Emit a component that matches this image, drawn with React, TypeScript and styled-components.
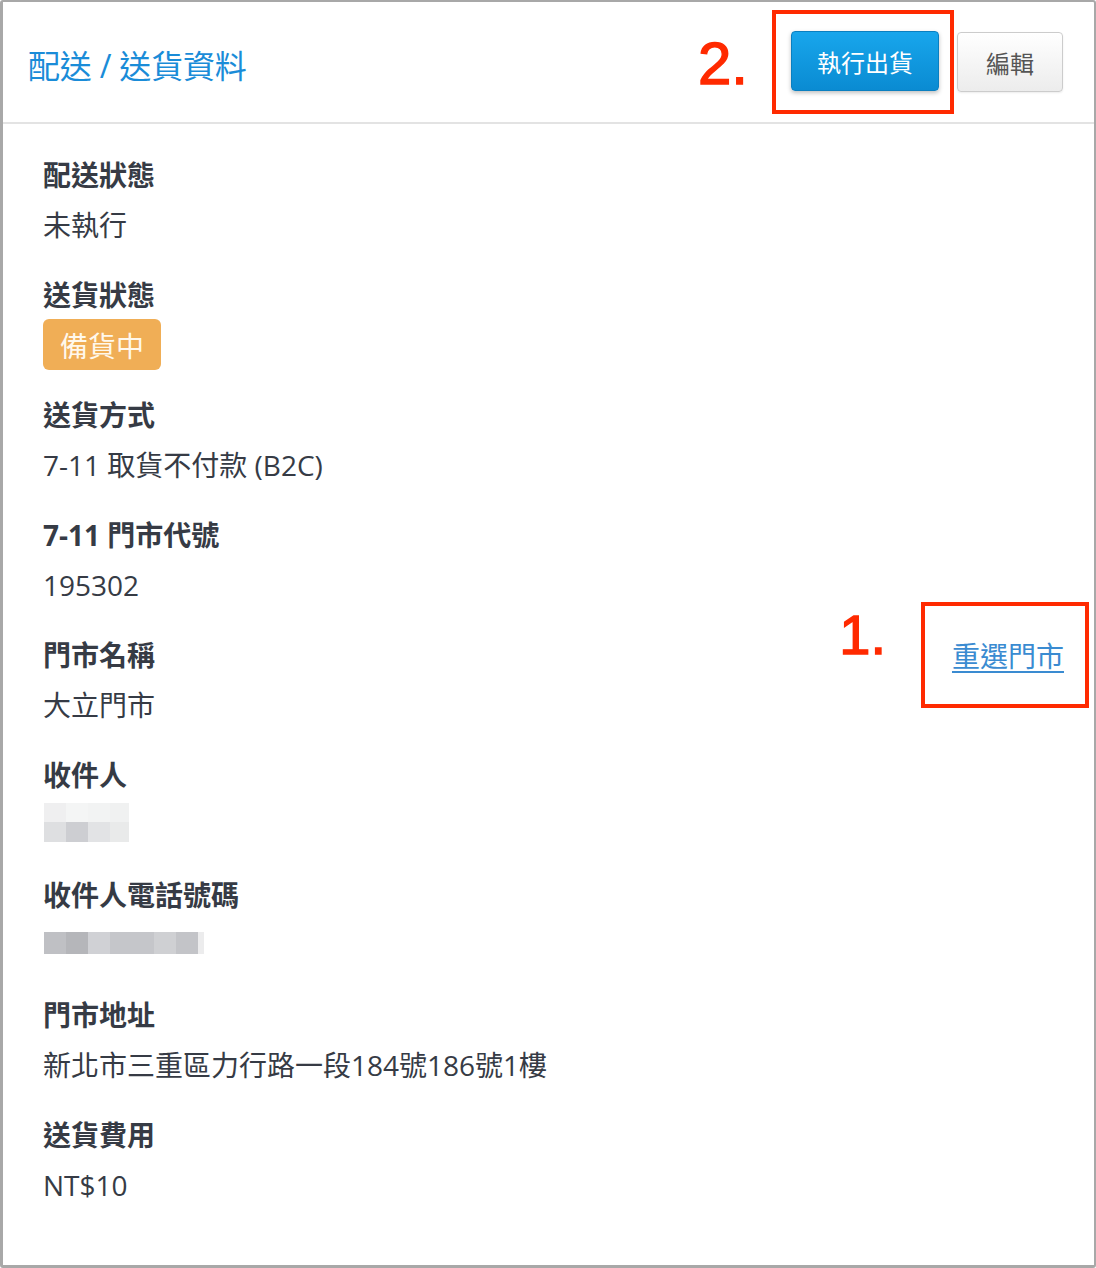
import React from "react";
import styled, { createGlobalStyle } from "styled-components";

const Global = createGlobalStyle`
  html, body { margin: 0; padding: 0; background: #ffffff; }
  body { font-family: "Open Sans", "Noto Sans CJK TC", sans-serif; }
  * { box-sizing: border-box; }
`;

const FONT = `"Open Sans", "Noto Sans CJK TC", sans-serif`;
const NOTE_RED = "#ff2a00";

const Frame = styled.div`
  width: 1096px;
  height: 1268px;
  border: 2px solid #a8a8a8;
  border-left-width: 3px;
  border-bottom-width: 3px;
  border-radius: 3px;
  background: #fff;
  display: flex;
  flex-direction: column;
  overflow: hidden;
`;

const Header = styled.header`
  height: 122px;
  flex: none;
  display: flex;
  align-items: center;
  justify-content: space-between;
  padding: 0 31px 0 25px;
  border-bottom: 2px solid #e3e3e3;
`;

const Title = styled.h1`
  margin: 4px 0 0;
  font-family: ${FONT};
  font-size: 32px;
  font-weight: 400;
  color: #1a8cd8;
  letter-spacing: -0.2px;
`;

const Actions = styled.div`
  display: flex;
  align-items: center;
`;

const StepNote = styled.span<{ $size: number }>`
  font-family: "Liberation Sans", Arial, sans-serif;
  font-size: ${(p) => p.$size}px;
  line-height: 1;
  color: ${NOTE_RED};
  font-weight: 400;
  -webkit-text-stroke: 1.4px ${NOTE_RED};
`;

const HeaderNote = styled(StepNote)`
  margin-right: 24px;
  margin-top: 4px;
`;

const Highlight = styled.div<{ $pad: string }>`
  border: 4px solid ${NOTE_RED};
  padding: ${(p) => p.$pad};
  display: flex;
  align-items: center;
`;

const Button = styled.button<{ $primary?: boolean; $padX: number }>`
  height: 60px;
  padding: 0 ${(p) => p.$padX}px;
  font-family: ${FONT};
  font-size: 24px;
  border-radius: 4px;
  cursor: pointer;
  ${(p) =>
    p.$primary
      ? `
    color: #ffffff;
    background: linear-gradient(#18a6ec, #0a8bd2);
    border: 1px solid #0a7fc0;
    box-shadow: 0 2px 4px rgba(0, 0, 0, 0.25);
  `
      : `
    color: #555555;
    background: linear-gradient(#ffffff, #ececec);
    border: 1px solid #cccccc;
    box-shadow: 0 1px 2px rgba(0, 0, 0, 0.08);
  `}
`;

const EditButton = styled(Button)`
  margin-left: 3px;
`;

const Body = styled.main`
  padding: 26px 31px 0 40px;
  display: flex;
  flex-direction: column;
`;

const Field = styled.section`
  margin-bottom: 20px;
  display: flex;
  justify-content: space-between;
  align-items: flex-start;
`;

const FieldMain = styled.div`
  display: flex;
  flex-direction: column;
`;

const Label = styled.div`
  font-family: ${FONT};
  font-size: 28px;
  font-weight: 700;
  line-height: 50px;
  color: #363b45;
`;

const Value = styled.div`
  font-family: ${FONT};
  font-size: 28px;
  font-weight: 400;
  line-height: 50px;
  height: 50px;
  color: #363b45;
`;

const Badge = styled.span`
  display: inline-flex;
  align-items: center;
  height: 51px;
  margin-top: -1px;
  padding: 0 17px;
  border-radius: 6px;
  background: #f0ae56;
  color: #fff8ec;
  font-family: ${FONT};
  font-size: 28px;
  align-self: flex-start;
`;

const BlurSlot = styled.div`
  height: 50px;
`;

const Pixels = styled.div<{ $top: number }>`
  display: flex;
  flex-direction: column;
  margin-top: ${(p) => p.$top}px;
  margin-left: 1px;
`;

const PixelRow = styled.div<{ $h: number }>`
  display: flex;
  height: ${(p) => p.$h}px;
`;

const Pixel = styled.div<{ $w: number; $c: string }>`
  width: ${(p) => p.$w}px;
  background: ${(p) => p.$c};
`;

const StorePick = styled.div`
  display: flex;
  align-items: flex-start;
  margin-top: -28px;
  margin-right: -26px;
`;

const SideNote = styled(StepNote)`
  margin-top: 5px;
  margin-right: 35px;
`;

const ReselectLink = styled.a`
  font-family: ${FONT};
  font-size: 28px;
  line-height: 50px;
  color: #3a8bd1;
  text-decoration: underline;
  text-underline-offset: 4px;
  text-decoration-thickness: 2px;
  cursor: pointer;
`;

type PixelSpec = { w: number; c: string };

const nameRows: { h: number; cells: PixelSpec[] }[] = [
  {
    h: 19,
    cells: [
      { w: 22, c: "#efeff0" },
      { w: 22, c: "#f4f5f5" },
      { w: 22, c: "#f2f3f3" },
      { w: 19, c: "#f0f1f1" },
    ],
  },
  {
    h: 20,
    cells: [
      { w: 22, c: "#dedfe1" },
      { w: 22, c: "#cdced2" },
      { w: 22, c: "#e2e3e5" },
      { w: 19, c: "#e9eaea" },
    ],
  },
];

const phoneRows: { h: number; cells: PixelSpec[] }[] = [
  {
    h: 22,
    cells: [
      { w: 22, c: "#bfc0c4" },
      { w: 22, c: "#b5b6ba" },
      { w: 22, c: "#d0d1d5" },
      { w: 44, c: "#c5c6ca" },
      { w: 22, c: "#cfd0d3" },
      { w: 22, c: "#c3c4c8" },
      { w: 6, c: "#ececed" },
    ],
  },
];

const Blurred = ({ rows, top }: { rows: { h: number; cells: PixelSpec[] }[]; top: number }) => (
  <BlurSlot>
    <Pixels $top={top}>
      {rows.map((r, i) => (
        <PixelRow key={i} $h={r.h}>
          {r.cells.map((c, j) => (
            <Pixel key={j} $w={c.w} $c={c.c} />
          ))}
        </PixelRow>
      ))}
    </Pixels>
  </BlurSlot>
);

export default function App() {
  return (
    <>
      <Global />
      <Frame>
        <Header>
          <Title>配送 / 送貨資料</Title>
          <Actions>
            <HeaderNote $size={60}>2.</HeaderNote>
            <Highlight $pad="17px 11px 19px 15px">
              <Button $primary $padX={25}>執行出貨</Button>
            </Highlight>
            <EditButton $padX={28}>編輯</EditButton>
          </Actions>
        </Header>
        <Body>
          <Field>
            <FieldMain>
              <Label>配送狀態</Label>
              <Value>未執行</Value>
            </FieldMain>
          </Field>
          <Field>
            <FieldMain>
              <Label>送貨狀態</Label>
              <Badge>備貨中</Badge>
            </FieldMain>
          </Field>
          <Field>
            <FieldMain>
              <Label>送貨方式</Label>
              <Value>7-11 取貨不付款 (B2C)</Value>
            </FieldMain>
          </Field>
          <Field>
            <FieldMain>
              <Label>7-11 門市代號</Label>
              <Value>195302</Value>
            </FieldMain>
          </Field>
          <Field>
            <FieldMain>
              <Label>門市名稱</Label>
              <Value>大立門市</Value>
            </FieldMain>
            <StorePick>
              <SideNote $size={56}>1.</SideNote>
              <Highlight $pad="25px 21px 23px 27px">
                <ReselectLink>重選門市</ReselectLink>
              </Highlight>
            </StorePick>
          </Field>
          <Field>
            <FieldMain>
              <Label>收件人</Label>
              <Blurred rows={nameRows} top={3} />
            </FieldMain>
          </Field>
          <Field>
            <FieldMain>
              <Label>收件人電話號碼</Label>
              <Blurred rows={phoneRows} top={12} />
            </FieldMain>
          </Field>
          <Field>
            <FieldMain>
              <Label>門市地址</Label>
              <Value>新北市三重區力行路一段184號186號1樓</Value>
            </FieldMain>
          </Field>
          <Field>
            <FieldMain>
              <Label>送貨費用</Label>
              <Value>NT$10</Value>
            </FieldMain>
          </Field>
        </Body>
      </Frame>
    </>
  );
}
